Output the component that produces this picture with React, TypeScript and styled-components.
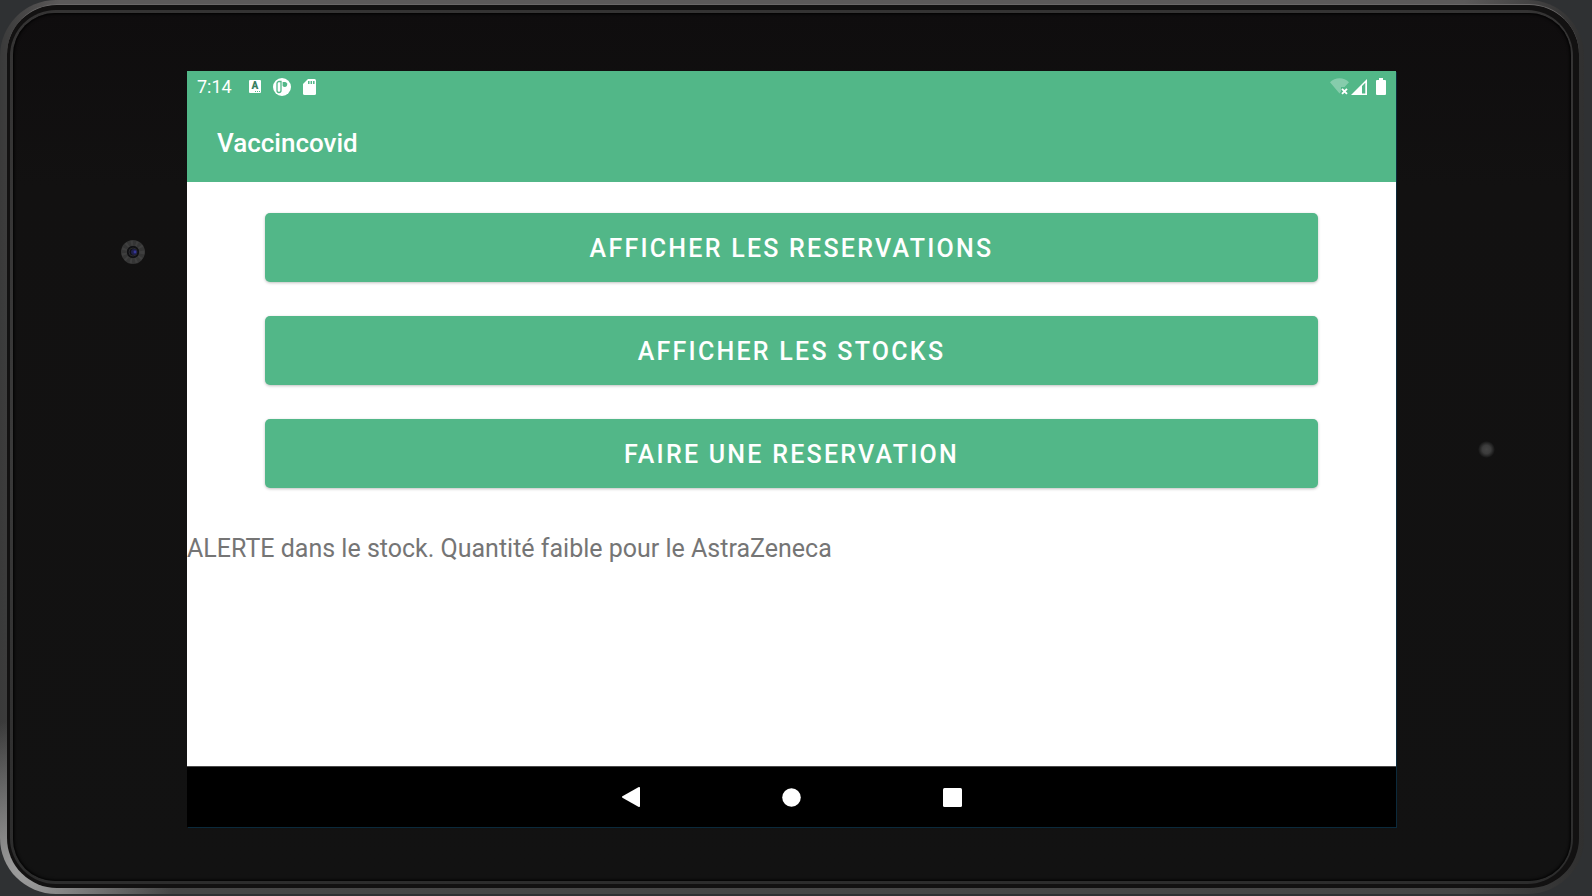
import React from "react";
import styled, { createGlobalStyle } from "styled-components";

const green = "#52b788";

const GlobalStyle = createGlobalStyle`
  *, *::before, *::after { box-sizing: border-box; }
  body {
    margin: 0;
    background: #2f3133;
    font-family: Roboto, "Liberation Sans", sans-serif;
  }
`;

const Page = styled.div`
  display: flex;
  min-height: 100vh;
  padding: 0 8px 2px 0;
`;

const Shell = styled.div`
  flex: 1;
  display: flex;
  padding: 4px 5px 6px 7px;
  border-radius: 56px;
  background:
    radial-gradient(circle at 24px calc(100% - 24px), #a0a0a0 0, rgba(120, 120, 120, 0) 150px),
    linear-gradient(to right, #3a3a3a 0, rgba(58, 58, 58, 0) 60px, rgba(52, 52, 52, 0) calc(100% - 120px), #303030 100%),
    linear-gradient(to bottom, #5c5a5a, #464646);
`;

const Channel = styled.div`
  flex: 1;
  display: flex;
  padding: 5px 6px 4px 3px;
  border-radius: 50px;
  border-top: 1px solid #6a6868;
  background: #121111;
`;

const Rim = styled.div`
  flex: 1;
  display: flex;
  padding: 3px 2px 3px 3px;
  border-radius: 46px;
  background: linear-gradient(to bottom, #343333, #3a3a3a 50%, #2c2c2c);
`;

const Glass = styled.div`
  flex: 1;
  display: grid;
  grid-template-columns: 174px minmax(0, 1fr) 175px;
  padding: 58px 0 54px;
  border-radius: 42px;
  background: linear-gradient(to bottom, #0f0d0e, #121111 20%, #121212);
  box-shadow: inset 0 0 3px 1px #000;
`;

const LeftBezel = styled.div`
  display: flex;
  justify-content: flex-end;
  align-items: flex-start;
  padding: 168px 41px 0 0;
`;

const RightBezel = styled.div`
  display: flex;
  align-items: center;
  padding-left: 82px;
`;

const Sensor = styled.div`
  width: 17px;
  height: 17px;
  border-radius: 50%;
  background: radial-gradient(closest-side, #454545 0, #3c3c3c 50%, #121212 100%);
`;

const Screen = styled.div`
  display: flex;
  flex-direction: column;
  background: #fff;
  box-shadow: 1px 1px 0 #0b2a3c;
`;

const StatusBar = styled.div`
  display: flex;
  justify-content: space-between;
  align-items: center;
  height: 31px;
  padding: 0 10px;
  background: ${green};
  color: #fff;
`;

const StatusGroup = styled.div<{ $gap: number }>`
  display: flex;
  align-items: center;
  gap: ${(p) => p.$gap}px;
`;

const Clock = styled.time`
  margin-right: 4px;
  font-size: 18px;
  line-height: 24px;
`;

const AppBar = styled.header`
  display: flex;
  align-items: center;
  height: 80px;
  padding: 2px 30px 0;
  background: ${green};
`;

const Title = styled.h1`
  margin: 0;
  color: #fff;
  font-size: 26px;
  font-weight: 500;
  line-height: 32px;
`;

const Content = styled.main`
  flex: 1;
  padding: 31px 0;
`;

const Actions = styled.div`
  display: flex;
  flex-direction: column;
  gap: 34px;
  padding: 0 78px;
`;

const ActionButton = styled.button`
  height: 69px;
  padding: 2px 16px 0;
  border: 0;
  border-radius: 5px;
  background: ${green};
  box-shadow: 0 1px 3px rgba(0, 0, 0, 0.25);
  color: #fff;
  font-family: inherit;
  font-size: 25px;
  font-weight: 500;
  letter-spacing: 0.09em;
  line-height: 32px;
  text-transform: uppercase;
  cursor: pointer;
`;

const Alert = styled.p`
  margin: 45px 0 0;
  color: #757575;
  font-size: 25px;
  line-height: 32px;
`;

const NavBar = styled.nav`
  display: flex;
  justify-content: center;
  height: 61px;
  background: #000;
  border-top: 1px solid #4a4a4a;
`;

const NavButton = styled.button`
  display: flex;
  align-items: center;
  justify-content: center;
  width: 161px;
  padding: 0;
  border: 0;
  background: transparent;
  cursor: pointer;
`;

const Camera = () => (
  <svg width="26" height="26" viewBox="0 0 26 26" aria-hidden="true">
    <circle cx="13" cy="13" r="9" fill="none" stroke="#353535" strokeWidth="6" />
    <circle cx="13" cy="13" r="9" fill="none" stroke="#4a4a4a" strokeWidth="5" strokeDasharray="2 3" opacity="0.5" />
    <circle cx="13" cy="13" r="6" fill="#111114" />
    <circle cx="13" cy="13" r="4" fill="none" stroke="#29292d" />
    <circle cx="14" cy="13" r="3" fill="#20204a" />
    <circle cx="15" cy="13" r="1.4" fill="#36369a" />
  </svg>
);

const KeyboardIcon = () => (
  <svg width="13" height="13" viewBox="0 0 13 13" aria-hidden="true">
    <rect x="1" width="12" height="13" rx="1" fill="#fff" />
    <text x="7" y="9" textAnchor="middle" fontFamily="Roboto, sans-serif" fontSize="10" fontWeight="900" fill="#397f5f">
      A
    </text>
    <path d="M7 11.500h5" stroke={green} strokeDasharray="1 1" />
  </svg>
);

const ParkingIcon = () => (
  <svg width="18" height="18" viewBox="0 0 18 18" aria-hidden="true">
    <circle cx="9" cy="9" r="9" fill="#fff" />
    <path
      d="M8 3.500H6A2 2 0 0 0 4 5.500v7a2 2 0 0 0 4 0z"
      fill="#fff"
      stroke={green}
      strokeWidth="1.300"
    />
    <path d="M9.600 4h2.200a2.500 2.500 0 1 1-2.200 3.800z" fill={green} />
  </svg>
);

const SdCardIcon = () => (
  <svg width="13" height="16" viewBox="0 0 13 16" aria-hidden="true">
    <path d="M5 0h6.5A1.5 1.5 0 0 1 13 1.500v13a1.500 1.500 0 0 1-1.500 1.500h-10A1.500 1.500 0 0 1 0 14.500V5z" fill="#fff" />
    <path d="M5.800 2v3M8.300 2v3M10.800 2v3" stroke={green} strokeWidth="1.500" />
  </svg>
);

const WifiIcon = () => (
  <svg width="19" height="17" viewBox="0 0 19 17" aria-hidden="true">
    <path d="M0 4.300C5-1.200 14-1.200 19 4.300L14.500 9H11v4.500L9.500 15.500z" fill="#fff" opacity="0.3" />
    <path d="M12 10.800l5 5M17 10.800l-5 5" stroke="#fff" strokeWidth="1.900" />
  </svg>
);

const SignalIcon = () => (
  <svg width="16" height="16" viewBox="0 0 16 16" aria-hidden="true">
    <path fillRule="evenodd" d="M0 16L16 0v16zM11 7v7.400h3.300V3.700z" fill="#fff" />
  </svg>
);

const BatteryIcon = () => (
  <svg width="10" height="17" viewBox="0 0 10 17" aria-hidden="true">
    <path d="M3 0h4v2h2a1 1 0 0 1 1 1v13a1 1 0 0 1-1 1H1a1 1 0 0 1-1-1V3a1 1 0 0 1 1-1h2z" fill="#fff" />
  </svg>
);

const BackIcon = () => (
  <svg width="18" height="20" viewBox="0 0 18 20" aria-hidden="true">
    <path d="M.4 9.300L16.800.1Q18-.3 18 1v18q0 1.300-1.200.9L.4 10.700Q-.4 10 .4 9.300z" fill="#fff" />
  </svg>
);

const HomeIcon = () => (
  <svg width="19" height="19" viewBox="0 0 19 19" aria-hidden="true">
    <circle cx="9.500" cy="9.500" r="9.300" fill="#fff" />
  </svg>
);

const RecentsIcon = () => (
  <svg width="19" height="19" viewBox="0 0 19 19" aria-hidden="true">
    <rect width="19" height="19" rx="1.500" fill="#fff" />
  </svg>
);

const actions = ["Afficher les reservations", "Afficher les stocks", "Faire une reservation"];

export default function App() {
  return (
    <>
      <GlobalStyle />
      <Page>
        <Shell>
          <Channel>
            <Rim>
              <Glass>
                <LeftBezel>
                  <Camera />
                </LeftBezel>
                <Screen>
                  <StatusBar>
                    <StatusGroup $gap={12}>
                      <Clock>7:14</Clock>
                      <KeyboardIcon />
                      <ParkingIcon />
                      <SdCardIcon />
                    </StatusGroup>
                    <StatusGroup $gap={2}>
                      <WifiIcon />
                      <StatusGroup $gap={9}>
                        <SignalIcon />
                        <BatteryIcon />
                      </StatusGroup>
                    </StatusGroup>
                  </StatusBar>
                  <AppBar>
                    <Title>Vaccincovid</Title>
                  </AppBar>
                  <Content>
                    <Actions>
                      {actions.map((label) => (
                        <ActionButton key={label} type="button">
                          {label}
                        </ActionButton>
                      ))}
                    </Actions>
                    <Alert role="status">ALERTE dans le stock. Quantité faible pour le AstraZeneca</Alert>
                  </Content>
                  <NavBar aria-label="Navigation">
                    <NavButton type="button" aria-label="Retour">
                      <BackIcon />
                    </NavButton>
                    <NavButton type="button" aria-label="Accueil">
                      <HomeIcon />
                    </NavButton>
                    <NavButton type="button" aria-label="Applications récentes">
                      <RecentsIcon />
                    </NavButton>
                  </NavBar>
                </Screen>
                <RightBezel>
                  <Sensor />
                </RightBezel>
              </Glass>
            </Rim>
          </Channel>
        </Shell>
      </Page>
    </>
  );
}
